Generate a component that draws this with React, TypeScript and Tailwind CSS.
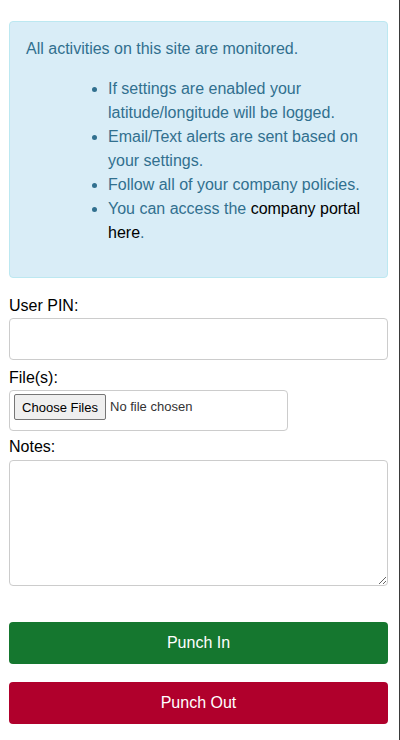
export default function App() {
  return (
    <div
      className="min-h-screen w-[400px] bg-white border-r border-[#3a3a3a] text-black"
      style={{ fontFamily: '"Liberation Sans", Arial, sans-serif' }}
    >
      <div className="pl-[9px] pr-[11px] pt-[21px] pb-4 text-[16px] leading-6">
        {/* notice */}
        <div className="rounded-[4px] border border-[#bce8f1] bg-[#d9edf7] text-[#31708f] pt-[15px] pb-[16px] pl-[16px] pr-[15px]">
          <p className="mb-4">All activities on this site are monitored.</p>
          <ul className="list-disc pl-[82px] mb-4">
            <li>If settings are enabled your latitude/longitude will be logged.</li>
            <li>Email/Text alerts are sent based on your settings.</li>
            <li>Follow all of your company policies.</li>
            <li>
              You can access the <a className="text-black">company portal here</a>.
            </li>
          </ul>
        </div>

        <label className="block mt-4">User PIN:</label>
        <input
          type="password"
          className="block w-full h-[42px] rounded-[4px] border border-[#ccc] px-3 outline-none"
        />

        <label className="block mt-[6px]">File(s):</label>
        <div className="flex items-start w-[279px] h-[41px] rounded-[4px] border border-[#ccc] pl-[4px] pt-[3px]">
          <button className="h-[26px] w-[92px] rounded-[2px] border border-[#767676] bg-[#efefef] text-[13px] leading-none text-black">
            Choose Files
          </button>
          <span className="ml-[4px] text-[13px] leading-[26px] text-[#333]">No file chosen</span>
        </div>

        <label className="block mt-[4px] mb-px">Notes:</label>
        <textarea className="block w-full h-[126px] rounded-[4px] border border-[#ccc] p-2 outline-none resize-y" />

        <button className="mt-[36px] block w-full h-[42px] rounded-[4px] bg-[#15772f] text-white">
          Punch In
        </button>
        <button className="mt-[18px] block w-full h-[42px] rounded-[4px] bg-[#b0002c] text-white">
          Punch Out
        </button>
      </div>
    </div>
  );
}
